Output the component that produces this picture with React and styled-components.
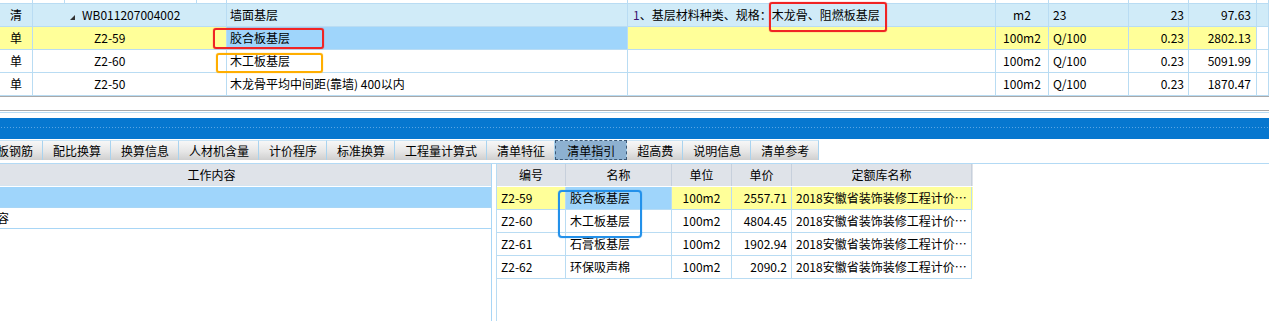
import React from 'react';
import styled, { createGlobalStyle } from 'styled-components';

const GlobalStyle = createGlobalStyle`
  html, body {
    margin: 0;
    padding: 0;
    background: #ffffff;
  }
  body {
    font-family: "Noto Sans CJK SC", "Noto Sans", sans-serif;
    font-size: 12px;
    color: #000;
  }
`;

const LINE = '#b9dcf3';

const Page = styled.div`
  position: relative;
  width: 1269px;
  height: 321px;
  overflow: hidden;
  background: #fff;
`;

const Row = styled.div`
  display: grid;
  grid-template-columns: ${p => p.$cols};
  height: ${p => p.$h}px;
  background: ${p => p.$bg || '#fff'};
`;

const Cell = styled.div`
  box-sizing: border-box;
  border-right: 1px solid ${LINE};
  border-bottom: 1px solid ${LINE};
  padding: 0 ${p => p.$pr || 3}px 0 ${p => p.$pl || 3}px;
  line-height: ${p => p.$h - 1}px;
  text-align: ${p => p.$align || 'left'};
  background: ${p => p.$bg || 'transparent'};
  white-space: nowrap;
  overflow: hidden;
  text-overflow: ellipsis;
`;

const Expander = styled.svg`
  width: 5px;
  height: 5px;
  margin-right: 7px;
  vertical-align: 0px;
`;

const Purple = styled.span`
  color: #3b1670;
`;

const ScrollTrack = styled.div`
  height: 15px;
  box-sizing: border-box;
  border-top: 1px solid #a9a9a9;
  border-bottom: 1px solid #a9a9a9;
`;

const SplitGap = styled.div`
  margin-top: 1px;
  height: 6px;
  box-sizing: border-box;
  border-top: 1px solid ${LINE};
`;

const BlueBar = styled.div`
  height: 21px;
  background-color: #0677cf;
  background-image: linear-gradient(90deg, #5ba6e4 1px, transparent 1px);
  background-size: 3px 1px;
  background-repeat: repeat-x;
  background-position: 1px 9px;
`;

const TabBar = styled.div`
  display: flex;
  margin-top: 1px;
  margin-left: -13px;
  height: 20px;
`;

const Tab = styled.div`
  box-sizing: border-box;
  height: 20px;
  padding: ${p => (p.$active ? '0 11px 0 12px' : '0 9px 0 10px')};
  line-height: 19px;
  white-space: nowrap;
  border-right: 1px solid #a9d3ef;
  border-top: 1px solid #c9e4f5;
  background: ${p =>
    p.$active ? '#8db1d1' : 'linear-gradient(#f7f7f7, #e6e6e6 55%, #cfcfcf)'};
  outline: ${p => (p.$active ? '1px dashed #3c5876' : 'none')};
  outline-offset: -1px;
`;

const Lower = styled.div`
  display: flex;
  margin-top: 3px;
  border-top: 1px solid #b3daf5;
  height: 160px;
`;

const LeftPanel = styled.div`
  width: 492px;
  flex: none;
  box-sizing: border-box;
  border-right: 1px solid #a8d6f6;
  overflow: hidden;
`;

const PanelHead = styled.div`
  height: 22px;
  line-height: 21px;
  box-sizing: border-box;
  background: #dfe3e9;
  border-bottom: 1px solid #d6e4ef;
  text-align: center;
  padding-right: 68px;
`;

const PanelRow = styled.div`
  height: 21px;
  line-height: 20px;
  box-sizing: border-box;
  background: ${p => p.$bg || '#fff'};
  border-bottom: 1px solid #a8d6f6;
  margin-top: ${p => p.$mt || 0}px;
  text-indent: ${p => p.$indent || 0}px;
  white-space: nowrap;
`;

const RightPanel = styled.div`
  flex: 1;
  padding-left: 4px;
`;

const RefTable = styled.div`
  width: 476px;
  height: 100%;
  border-left: 1px solid #b9dcf3;
`;

const HeadRow = styled.div`
  display: grid;
  grid-template-columns: 69px 106px 60px 60px 180px;
  height: 22px;
  margin-bottom: 1px;
  background: #dfe3e9;
`;

const HeadCell = styled.div`
  border-right: 1px solid #c7d0dc;
  line-height: 21px;
  text-align: center;
`;

const Mark = styled.div`
  position: absolute;
  left: ${p => p.$x}px;
  top: ${p => p.$y}px;
  width: ${p => p.$w}px;
  height: ${p => p.$h}px;
  box-sizing: border-box;
  border: 2px solid ${p => p.$c};
  border-radius: ${p => p.$r || 3}px;
  box-shadow: 0 0 1px ${p => p.$c};
  pointer-events: none;
`;

const topCols = '33px 194px 401px 368px 53px 80px 60px 68px 12px';
const stubCols = '33px 32px 132px 30px 401px 368px 53px 80px 60px 68px 12px';

const topRows = [
  { type: '清', code: 'WB011207004002', name: '墙面基层', unit: 'm2', expr: '23', qty: '23', price: '97.63', bg: '#d0ebf8', head: true },
  { type: '单', code: 'Z2-59', name: '胶合板基层', unit: '100m2', expr: 'Q/100', qty: '0.23', price: '2802.13', bg: '#ffff99', sel: true },
  { type: '单', code: 'Z2-60', name: '木工板基层', unit: '100m2', expr: 'Q/100', qty: '0.23', price: '5091.99' },
  { type: '单', code: 'Z2-50', name: '木龙骨平均中间距(靠墙) 400以内', unit: '100m2', expr: 'Q/100', qty: '0.23', price: '1870.47' },
];

const tabs = ['板钢筋', '配比换算', '换算信息', '人材机含量', '计价程序', '标准换算', '工程量计算式', '清单特征', '清单指引', '超高费', '说明信息', '清单参考'];

const refRows = [
  { code: 'Z2-59', name: '胶合板基层', unit: '100m2', price: '2557.71', bg: '#ffff99', sel: true },
  { code: 'Z2-60', name: '木工板基层', unit: '100m2', price: '4804.45' },
  { code: 'Z2-61', name: '石膏板基层', unit: '100m2', price: '1902.94' },
  { code: 'Z2-62', name: '环保吸声棉', unit: '100m2', price: '2090.2' },
];

const App = () => {
  return (
    <Page>
      <GlobalStyle />

      <Row $cols={stubCols} $h={4}>
        {stubCols.split(' ').map((_, i) => (
          <Cell key={i} $h={4} />
        ))}
      </Row>

      {topRows.map(r => (
        <Row key={r.code} $cols={topCols} $h={23} $bg={r.bg}>
          <Cell $h={23} $align="center">{r.type}</Cell>
          <Cell $h={23} $pl={r.head ? 37 : 61}>
            {r.head && (
              <Expander viewBox="0 0 5 5">
                <polygon points="5,0 5,5 0,5" fill="#333" />
              </Expander>
            )}
            {r.code}
          </Cell>
          <Cell $h={23} $bg={r.sel ? '#9fd5fb' : undefined}>{r.name}</Cell>
          <Cell $h={23} $pl={5}>
            {r.head && (
              <>
                <Purple>1</Purple>、基层材料种类、规格：木龙骨、阻燃板基层
              </>
            )}
          </Cell>
          <Cell $h={23} $align="center">{r.unit}</Cell>
          <Cell $h={23} $pl={4}>{r.expr}</Cell>
          <Cell $h={23} $align="right" $pr={4}>{r.qty}</Cell>
          <Cell $h={23} $align="right" $pr={5}>{r.price}</Cell>
          <Cell $h={23} $bg={r.sel ? '#fff' : undefined} />
        </Row>
      ))}

      <ScrollTrack />
      <SplitGap />
      <BlueBar />

      <TabBar>
        {tabs.map(t => (
          <Tab key={t} $active={t === '清单指引'}>{t}</Tab>
        ))}
      </TabBar>

      <Lower>
        <LeftPanel>
          <PanelHead>工作内容</PanelHead>
          <PanelRow $bg="#9fd5fb" $mt={1} />
          <PanelRow $indent={-39}>工作内容</PanelRow>
        </LeftPanel>

        <RightPanel>
          <RefTable>
            <HeadRow>
              <HeadCell>编号</HeadCell>
              <HeadCell>名称</HeadCell>
              <HeadCell>单位</HeadCell>
              <HeadCell>单价</HeadCell>
              <HeadCell>定额库名称</HeadCell>
            </HeadRow>
            {refRows.map(r => (
              <Row key={r.code} $cols="69px 106px 60px 60px 180px" $h={23} $bg={r.bg}>
                <Cell $h={23} $pl={4}>{r.code}</Cell>
                <Cell $h={23} $pl={4} $bg={r.sel ? '#9fd5fb' : undefined}>{r.name}</Cell>
                <Cell $h={23} $align="center">{r.unit}</Cell>
                <Cell $h={23} $align="right" $pr={4}>{r.price}</Cell>
                <Cell $h={23} $pl={4} $pr={4}>2018安徽省装饰装修工程计价定额</Cell>
              </Row>
            ))}
          </RefTable>
        </RightPanel>
      </Lower>

      <Mark $x={213} $y={28} $w={111} $h={21} $c="#f02424" />
      <Mark $x={216} $y={53} $w={107} $h={20} $c="#ffae00" />
      <Mark $x={769} $y={2} $w={118} $h={30} $c="#f02424" />
      <Mark $x={558} $y={190} $w={84} $h={48} $c="#2391ea" $r={4} />
    </Page>
  );
};

export default App;
